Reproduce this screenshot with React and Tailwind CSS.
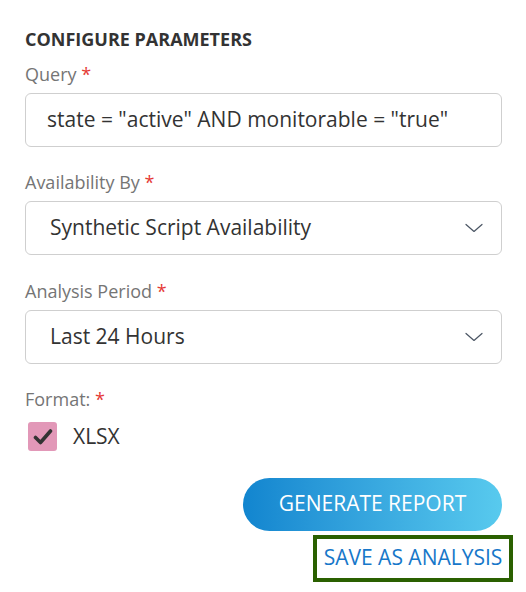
import { useState } from "react";

const font = { fontFamily: '"Open Sans", "Liberation Sans", sans-serif' };

function Label({ children, className = "" }) {
  return (
    <div className={`text-[18px] leading-[25px] text-[#757575] ${className}`}>
      {children} <span className="text-[#e53935]">*</span>
    </div>
  );
}

function Chevron() {
  return (
    <svg width="18" height="10" viewBox="0 0 18 10" fill="none" className="shrink-0">
      <path d="M1 1.5 L9 8.5 L17 1.5" stroke="#4a5563" strokeWidth="1.2" strokeLinecap="round" strokeLinejoin="round" />
    </svg>
  );
}

function SelectBox({ value }) {
  return (
    <div className="mt-[6px] h-[54px] w-[477px] rounded-[6px] border border-[#cfcfcf] flex items-center justify-between pl-[24px] pr-[18px] bg-white">
      <span className="text-[21px] text-[#333]">{value}</span>
      <Chevron />
    </div>
  );
}

export default function App() {
  const [checked, setChecked] = useState(true);

  return (
    <div className="min-h-screen bg-white pl-[25px] pt-[27px]" style={font}>
      <h2 className="text-[18px] leading-[24px] font-bold text-[#333]">CONFIGURE PARAMETERS</h2>

      <Label className="mt-[11px]">Query</Label>
      <div className="mt-[6px] h-[54px] w-[477px] rounded-[6px] border border-[#cfcfcf] flex items-center pl-[21px]">
        <span className="text-[21px] text-[#333]">state = "active" AND monitorable = "true"</span>
      </div>

      <Label className="mt-[23px]">Availability By</Label>
      <SelectBox value="Synthetic Script Availability" />

      <Label className="mt-[24px]">Analysis Period</Label>
      <SelectBox value="Last 24 Hours" />

      <Label className="mt-[23px]">Format:</Label>
      <label className="mt-[9px] ml-[3px] flex items-center gap-[16px] cursor-pointer" onClick={() => setChecked(!checked)}>
        <span className="w-[29px] h-[29px] rounded-[3px] bg-[#e298b8] flex items-center justify-center">
          {checked && (
            <svg width="20" height="18" viewBox="0 0 20 18">
              <path d="M2.5 9.5 L7.5 14.5 L17.5 3" stroke="#333" strokeWidth="3.6" fill="none" strokeLinecap="round" strokeLinejoin="round" />
            </svg>
          )}
        </span>
        <span className="text-[21px] text-[#333]">XLSX</span>
      </label>

      <div className="w-[477px] flex flex-col items-end mt-[25px]">
        <button className="h-[53px] w-[259px] rounded-full bg-gradient-to-r from-[#1185cf] to-[#58caee] text-white text-[21px] font-normal">
          GENERATE REPORT
        </button>
        <a href="#" className="mt-[4px] -mr-[11px] border-[4px] border-[#2a6000] h-[47px] w-[200px] flex items-center justify-center text-[21px] text-[#1777c9]">
          SAVE AS ANALYSIS
        </a>
      </div>
    </div>
  );
}
